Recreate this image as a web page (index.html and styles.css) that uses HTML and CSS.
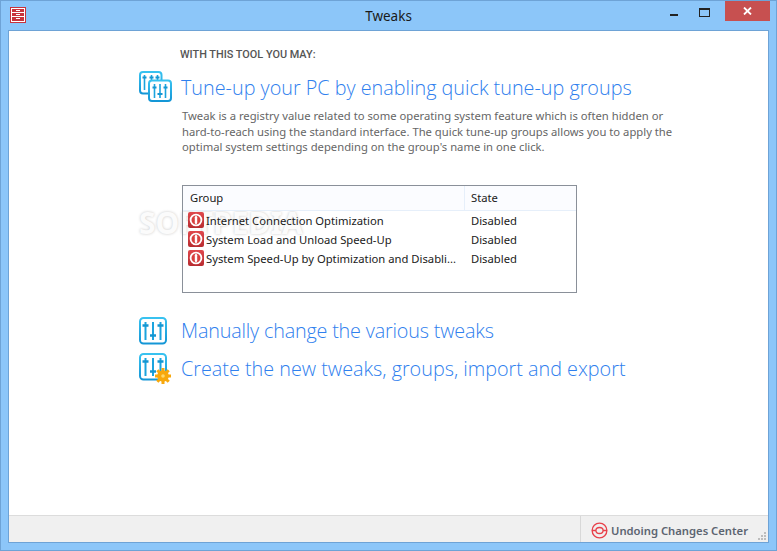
FILE: index.html
```html
<!DOCTYPE html>
<html lang="en">
<head>
	<meta charset="UTF-8">
	<title>Tweaks</title>
	<link rel="stylesheet" href="styles.css">
</head>
<body>
	<svg class="svgDefs" width="0" height="0">
		<defs>
			<linearGradient id="boxBlue" x1="0" y1="0" x2="0" y2="1">
				<stop offset="0" stop-color="#38c2f0"/>
				<stop offset="1" stop-color="#1496d6"/>
			</linearGradient>
			<linearGradient id="redBevel" x1="0" y1="0" x2="0" y2="1">
				<stop offset="0" stop-color="#e0484c"/>
				<stop offset="1" stop-color="#b82c30"/>
			</linearGradient>
			<symbol id="stateOff" viewBox="0 0 16 16">
				<rect width="16" height="16" rx="2" fill="url(#redBevel)"/>
				<circle cx="8" cy="8" r="5.400" fill="#d8403f" stroke="#fff" stroke-width="1.800"/>
				<rect x="6.800" y="4" width="2.400" height="8" rx="1.200" fill="#fff"/>
			</symbol>
			<symbol id="sliders" viewBox="0 0 28 28">
				<rect x="1" y="1" width="26" height="25.500" rx="3.500" fill="#fff" stroke="url(#boxBlue)" stroke-width="2"/>
				<path d="M6.500 5V23 M14 5V23 M21.500 5V23" stroke="#1ba4de" stroke-width="2" fill="none"/>
				<path d="M3.500 8.500H9.500 M11 18.500H17 M18.500 8.500H24.500" stroke="#1496d2" stroke-width="2.400" fill="none"/>
			</symbol>
		</defs>
	</svg>
	<div class="window">
		<header class="titleBar">
			<svg class="appIcon" width="16" height="16" viewBox="0 0 16 16">
				<rect x="0" y="0" width="16" height="16" fill="#c8323c"/>
				<rect x="1" y="1" width="14" height="14" fill="#fff"/>
				<rect x="2" y="2" width="12" height="3" fill="#c8323c"/>
				<rect x="2" y="6" width="12" height="3" fill="#c8323c"/>
				<rect x="2" y="10" width="12" height="4" fill="#c8323c"/>
				<rect x="6" y="3" width="4" height="1" fill="#fff"/>
				<rect x="6" y="7" width="4" height="1" fill="#fff"/>
				<rect x="6" y="11" width="4" height="1" fill="#fff"/>
			</svg>
			<div class="title">Tweaks</div>
			<div class="winBtns">
				<span class="minBtn"></span>
				<span class="maxBtn"></span>
				<span class="closeBtn">
					<svg width="9" height="8" viewBox="0 0 9 8"><path d="M1 0.5 L8 7.5 M8 0.5 L1 7.5" stroke="#fff" stroke-width="1.8"/></svg>
				</span>
			</div>
		</header>
		<main class="content">
			<div class="watermark">SOFTPEDIA</div>
			<div class="inner">
				<h2 class="lead">WITH THIS TOOL YOU MAY:</h2>
				<section class="item first">
					<svg class="icon" width="33" height="31" viewBox="0 0 33 31">
						<rect x="1" y="1" width="21.500" height="21.500" rx="3" fill="#fff" stroke="url(#boxBlue)" stroke-width="2"/>
						<path d="M5.500 4V19 M12.500 4V9 M18.500 4V9" stroke="#1ba4de" stroke-width="1.600" fill="none"/>
						<path d="M3.500 6.500H7.500 M10.500 6.500H14.500 M16.500 6.500H20.500" stroke="#1496d2" stroke-width="1.800" fill="none"/>
						<rect x="10" y="9.500" width="22" height="20.500" rx="3" fill="#fff" stroke="url(#boxBlue)" stroke-width="2"/>
						<path d="M15.500 13V27 M21 13V27 M26.500 13V27" stroke="#1ba4de" stroke-width="1.600" fill="none"/>
						<path d="M13.500 16.500H17.500 M18.500 23H23.500 M24.500 16.500H28.500" stroke="#1496d2" stroke-width="2" fill="none"/>
					</svg>
					<h1 class="heading">Tune-up your PC by enabling quick tune-up groups</h1>
				</section>
				<p class="desc">Tweak is a registry value related to some operating system feature which is often hidden or<br>hard-to-reach using the standard interface. The quick tune-up groups allows you to apply the<br>optimal system settings depending on the group's name in one click.</p>
				<div class="listBox">
					<div class="row listHead">
						<div class="colGroup">Group</div>
						<div class="colState">State</div>
					</div>
					<div class="row">
						<div class="colGroup">
							<svg class="stateIcon" width="16" height="16"><use href="#stateOff"/></svg>
							<span class="cellText">Internet Connection Optimization</span>
						</div>
						<div class="colState">Disabled</div>
					</div>
					<div class="row">
						<div class="colGroup">
							<svg class="stateIcon" width="16" height="16"><use href="#stateOff"/></svg>
							<span class="cellText">System Load and Unload Speed-Up</span>
						</div>
						<div class="colState">Disabled</div>
					</div>
					<div class="row">
						<div class="colGroup">
							<svg class="stateIcon" width="16" height="16"><use href="#stateOff"/></svg>
							<span class="cellText">System Speed-Up by Optimization and Disabli...</span>
						</div>
						<div class="colState">Disabled</div>
					</div>
				</div>
				<section class="item manual">
					<svg class="icon" width="28" height="28"><use href="#sliders"/></svg>
					<h1 class="heading">Manually change the various tweaks</h1>
				</section>
				<section class="item create">
					<svg class="icon" width="33" height="32" viewBox="0 0 33 32">
						<use href="#sliders" width="28" height="28"/>
						<circle cx="24" cy="23" r="5.800" fill="#f7a80c"/>
						<path d="M24 15V31 M16 23H32 M18.300 17.300L29.700 28.700 M29.700 17.300L18.300 28.700" stroke="#f7a80c" stroke-width="3"/>
						<circle cx="24" cy="23" r="1.800" fill="#ffd869"/>
					</svg>
					<h1 class="heading">Create the new tweaks, groups, import and export</h1>
				</section>
			</div>
			<footer class="statusBar">
				<div class="undoBtn">
					<svg width="17" height="17" viewBox="0 0 18 18" fill="none" stroke="#e8404a" stroke-width="1.400">
						<circle cx="9" cy="9" r="7.800"/>
						<ellipse cx="9" cy="9" rx="3.800" ry="3.200"/>
						<path d="M1 9H5.200 M12.800 9H17"/>
					</svg>
					<span>Undoing Changes Center</span>
				</div>
				<svg class="grip" width="9" height="9" viewBox="0 0 9 9" fill="#bdbdbd">
					<rect x="6" y="0" width="2" height="2"/>
					<rect x="3" y="3" width="2" height="2"/>
					<rect x="6" y="3" width="2" height="2"/>
					<rect x="0" y="6" width="2" height="2"/>
					<rect x="3" y="6" width="2" height="2"/>
					<rect x="6" y="6" width="2" height="2"/>
				</svg>
			</footer>
		</main>
	</div>
</body>
</html>
```

FILE: styles.css
```css
html,body,h1,h2,p{
	margin: 0;padding: 0;
}
body{
	width: 777px;
	height: 551px;
	overflow: hidden;
	font-family: "Open Sans","Liberation Sans",sans-serif;
}
.svgDefs{
	position: absolute;
}
.window{
	display: flex;
	flex-direction: column;
	width: 777px;
	height: 551px;
	box-sizing: border-box;
	padding: 0 7px 7px 7px;
	background: #8cc6f9;
	border: 1px solid #6ea3d6;
}
.titleBar{
	display: flex;
	align-items: flex-start;
	height: 29px;
	flex: none;
	position: relative;
}
.appIcon{
	margin: 6px 0 0 2px;
}
.title{
	position: absolute;
	left: 0;
	right: 0;
	top: 6px;
	text-align: center;
	font-family: "Noto Sans",sans-serif;
	font-size: 13.500px;
	line-height: 19px;
	color: #1a1a1a;
}
.winBtns{
	display: flex;
	margin-left: auto;
	margin-right: -1px;
}
.minBtn{
	width: 8px;
	height: 2px;
	margin: 13px 21px 0 0;
	background: #222;
}
.maxBtn{
	margin: 7px 15px 0 0;
	border: 1px solid #222;
	border-top-width: 2px;
	width: 9px;
	height: 6px;
}
.closeBtn{
	display: flex;
	align-items: center;
	justify-content: center;
	width: 45px;
	height: 20px;
	background: #c75050;
}
.content{
	position: relative;
	flex: 1;
	display: flex;
	flex-direction: column;
	background: #fff;
	border: 1px solid #6ea3d6;
}
.inner{
	position: relative;
	flex: 1;
	padding: 16px 0 0 130px;
}
.lead{
	margin-left: 41px;
	font-family: Roboto,sans-serif;
	font-size: 10.900px;
	line-height: 16px;
	font-weight: 500;
	color: #555;
}
.item{
	display: flex;
	align-items: center;
}
.first{
	margin-top: 6px;
}
.icon{
	flex: none;
}
.heading{
	font-family: "Open Sans",sans-serif;
	font-weight: 300;
	font-size: 19.800px;
	line-height: 30px;
	color: #2f80ee;
	white-space: nowrap;
}
.first .heading{
	margin: 4px 0 0 9px;
}
.desc{
	margin: 5px 0 0 43px;
	font-family: "Noto Sans",sans-serif;
	font-size: 11.250px;
	line-height: 15.500px;
	color: #666;
	white-space: nowrap;
}
.listBox{
	width: 393px;
	height: 106px;
	margin: 30px 0 0 43px;
	border: 1px solid #8a9099;
	font-family: "Noto Sans",sans-serif;
	font-size: 11.250px;
	color: #1a1a1a;
}
.watermark{
	position: absolute;
	left: 130px;
	top: 171px;
	font-family: "Noto Sans",sans-serif;
	font-size: 30px;
	font-weight: 700;
	color: #fbfbfb;
	text-shadow: 0 0 3px #c8c8c8;
}
.row{
	display: flex;
	align-items: center;
	height: 19px;
}
.listHead{
	height: 24px;
	background: #fbfcff;
	border-bottom: 1px solid #e6effa;
}
.colGroup{
	display: flex;
	align-items: center;
	width: 282px;
	height: 100%;
	box-sizing: border-box;
	padding-left: 5px;
	flex: none;
}
.listHead .colGroup{
	padding-left: 7px;
	border-right: 1px solid #e6effa;
}
.colState{
	padding-left: 6px;
}
.stateIcon{
	flex: none;
	margin-right: 2px;
}
.cellText{
	white-space: nowrap;
}
.manual{
	margin-top: 23px;
}
.manual .heading{
	margin-left: 14px;
	letter-spacing: -.18px;
}
.create{
	margin-top: 7px;
}
.create .heading{
	margin-left: 9px;
}
.statusBar{
	position: relative;
	display: flex;
	justify-content: flex-end;
	height: 26px;
	flex: none;
	background: #f0f0f0;
	border-top: 1px solid #dcdcdc;
}
.undoBtn{
	display: flex;
	align-items: center;
	gap: 3px;
	width: 188px;
	box-sizing: border-box;
	padding: 2px 0 0 10px;
	border-left: 1px solid #d8d8d8;
	font-family: "Noto Sans",sans-serif;
	font-size: 11.250px;
	font-weight: 600;
	color: #5c6470;
}
.grip{
	position: absolute;
	right: 1px;
	bottom: 1px;
}
```
